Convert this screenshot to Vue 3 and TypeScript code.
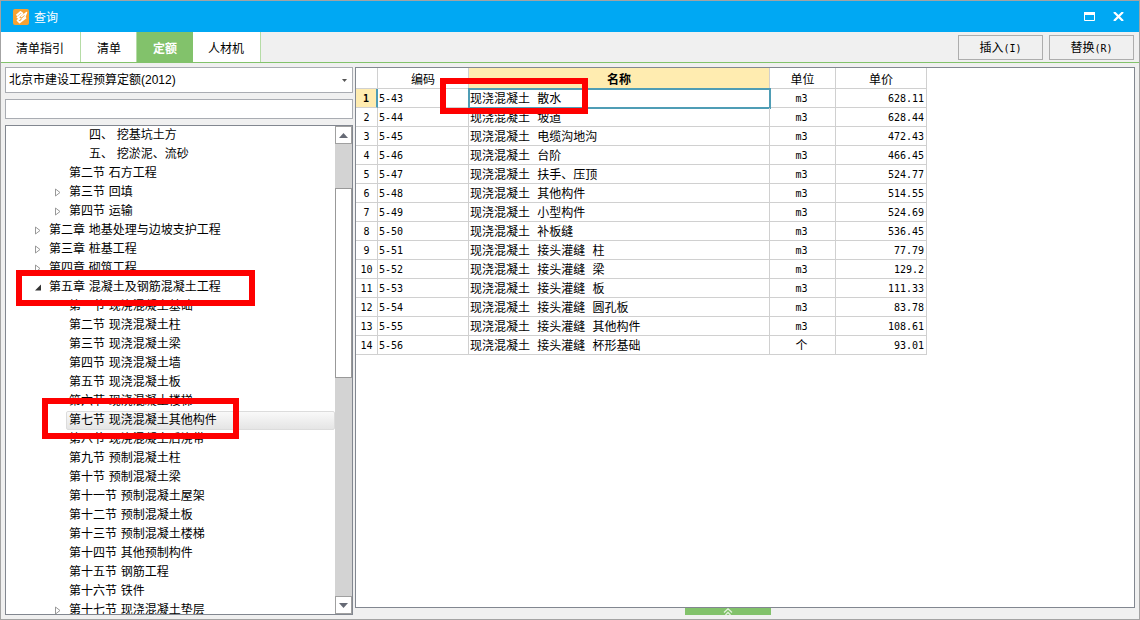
<script setup lang="ts">
import { ref } from 'vue'

interface TreeNode {
  text: string
  level: 1 | 2 | 3
  state?: 'open' | 'closed'
  mark?: 'chapter' | 'section'
}

interface Quota {
  code: string
  name: string
  unit: string
  price: string
}

const tabs = ['清单指引', '清单', '定额', '人材机']
const activeTab = ref('定额')
const library = ref('北京市建设工程预算定额(2012)')
const keyword = ref('')
const selectedNode = ref(15)
const selectedRow = ref(0)

const nodes: TreeNode[] = [
  { text: '四、 挖基坑土方', level: 3 },
  { text: '五、 挖淤泥、流砂', level: 3 },
  { text: '第二节 石方工程', level: 2 },
  { text: '第三节 回填', level: 2, state: 'closed' },
  { text: '第四节 运输', level: 2, state: 'closed' },
  { text: '第二章 地基处理与边坡支护工程', level: 1, state: 'closed' },
  { text: '第三章 桩基工程', level: 1, state: 'closed' },
  { text: '第四章 砌筑工程', level: 1, state: 'closed' },
  { text: '第五章 混凝土及钢筋混凝土工程', level: 1, state: 'open', mark: 'chapter' },
  { text: '第一节 现浇混凝土基础', level: 2 },
  { text: '第二节 现浇混凝土柱', level: 2 },
  { text: '第三节 现浇混凝土梁', level: 2 },
  { text: '第四节 现浇混凝土墙', level: 2 },
  { text: '第五节 现浇混凝土板', level: 2 },
  { text: '第六节 现浇混凝土楼梯', level: 2 },
  { text: '第七节 现浇混凝土其他构件', level: 2, mark: 'section' },
  { text: '第八节 现浇混凝土后浇带', level: 2 },
  { text: '第九节 预制混凝土柱', level: 2 },
  { text: '第十节 预制混凝土梁', level: 2 },
  { text: '第十一节 预制混凝土屋架', level: 2 },
  { text: '第十二节 预制混凝土板', level: 2 },
  { text: '第十三节 预制混凝土楼梯', level: 2 },
  { text: '第十四节 其他预制构件', level: 2 },
  { text: '第十五节 钢筋工程', level: 2 },
  { text: '第十六节 铁件', level: 2 },
  { text: '第十七节 现浇混凝土垫层', level: 2, state: 'closed' },
]

const rows: Quota[] = [
  { code: '5-43', name: '现浇混凝土 散水', unit: 'm3', price: '628.11' },
  { code: '5-44', name: '现浇混凝土 坡道', unit: 'm3', price: '628.44' },
  { code: '5-45', name: '现浇混凝土 电缆沟地沟', unit: 'm3', price: '472.43' },
  { code: '5-46', name: '现浇混凝土 台阶', unit: 'm3', price: '466.45' },
  { code: '5-47', name: '现浇混凝土 扶手、压顶', unit: 'm3', price: '524.77' },
  { code: '5-48', name: '现浇混凝土 其他构件', unit: 'm3', price: '514.55' },
  { code: '5-49', name: '现浇混凝土 小型构件', unit: 'm3', price: '524.69' },
  { code: '5-50', name: '现浇混凝土 补板缝', unit: 'm3', price: '536.45' },
  { code: '5-51', name: '现浇混凝土 接头灌缝 柱', unit: 'm3', price: '77.79' },
  { code: '5-52', name: '现浇混凝土 接头灌缝 梁', unit: 'm3', price: '129.2' },
  { code: '5-53', name: '现浇混凝土 接头灌缝 板', unit: 'm3', price: '111.33' },
  { code: '5-54', name: '现浇混凝土 接头灌缝 圆孔板', unit: 'm3', price: '83.78' },
  { code: '5-55', name: '现浇混凝土 接头灌缝 其他构件', unit: 'm3', price: '108.61' },
  { code: '5-56', name: '现浇混凝土 接头灌缝 杯形基础', unit: '个', price: '93.01' },
]
</script>

<template>
  <div class="window">
    <header class="titlebar">
      <svg class="logo" viewBox="0 0 16 16" aria-hidden="true">
        <rect width="16" height="16" rx="2" fill="#f7a233" />
        <path d="M3.500 6.500 7.500 3 9.500 4.500 4.500 8.500 7 9.500 4.500 11.500 6.500 13.500 13 8.500" fill="none" stroke="#fff" stroke-width="1.700" stroke-linejoin="round" />
        <path d="M8 8 13.500 3.500 12 7.500 8.500 10.500" fill="none" stroke="#fff" stroke-width="1.500" stroke-linejoin="round" />
      </svg>
      <h1>查询</h1>
      <div class="controls">
        <button type="button" aria-label="最大化">
          <svg width="11" height="9" viewBox="0 0 11 9"><path d="M.5.5h10v8H.5z" fill="none" stroke="#fff" /><path d="M0 0h11v3H0z" fill="#fff" /></svg>
        </button>
        <button type="button" aria-label="关闭">
          <svg width="11" height="9" viewBox="0 0 11 9"><path d="M1 0 10 9M10 0 1 9" stroke="#fff" stroke-width="2.200" /></svg>
        </button>
      </div>
    </header>

    <nav class="toolbar">
      <div class="tabs">
        <button v-for="tab in tabs" :key="tab" type="button" class="tab" :class="{ active: tab === activeTab }" @click="activeTab = tab">{{ tab }}</button>
      </div>
      <div class="actions">
        <button type="button" class="action">插入<span>(I)</span></button>
        <button type="button" class="action">替换<span>(R)</span></button>
      </div>
    </nav>

    <main class="body">
      <aside class="side">
        <div class="library">
          <select v-model="library" aria-label="定额库">
            <option>北京市建设工程预算定额(2012)</option>
          </select>
          <svg width="5" height="3" viewBox="0 0 5 3" aria-hidden="true"><path d="M0 0h5L2.500 3z" fill="#555" /></svg>
        </div>
        <input v-model="keyword" class="search" type="text" aria-label="搜索" />
        <div class="tree">
          <ul role="tree" aria-label="章节">
            <li v-for="(node, i) in nodes" :key="i" role="treeitem" :aria-selected="i === selectedNode" class="node" :class="['level-' + node.level, { selected: i === selectedNode }]" @click="selectedNode = i">
              <span class="slot">
                <button v-if="node.state" type="button" class="expander" :aria-label="node.state === 'open' ? '折叠' : '展开'">
                  <svg v-if="node.state === 'closed'" width="6" height="9" viewBox="0 0 6 9"><path d="M.5 1v7L5 4.500z" fill="#fff" stroke="#999" /></svg>
                  <svg v-else width="6" height="9" viewBox="0 0 6 9"><path d="M6 1.500v6H0z" fill="#333" /></svg>
                </button>
              </span>
              <span class="label">{{ node.text }}</span>
              <i v-if="node.mark" class="mark" :class="node.mark"></i>
            </li>
          </ul>
          <div class="scrollbar">
            <button type="button" aria-label="向上滚动"><svg width="9" height="5" viewBox="0 0 9 5"><path d="M0 5 4.500 0 9 5z" fill="#666a75" /></svg></button>
            <div class="track">
              <div class="before"></div>
              <div class="thumb"></div>
              <div class="after"></div>
            </div>
            <button type="button" aria-label="向下滚动"><svg width="9" height="5" viewBox="0 0 9 5"><path d="M0 0h9L4.500 5z" fill="#666a75" /></svg></button>
          </div>
        </div>
      </aside>

      <section class="content">
        <div class="sheet">
          <table>
            <colgroup>
              <col class="c-no" /><col class="c-code" /><col class="c-name" /><col class="c-unit" /><col class="c-price" />
            </colgroup>
            <thead>
              <tr>
                <th></th>
                <th>编码</th>
                <th class="current">名称</th>
                <th>单位</th>
                <th>单价</th>
              </tr>
            </thead>
            <tbody>
              <tr v-for="(row, i) in rows" :key="row.code" :class="{ picked: i === selectedRow }" @click="selectedRow = i">
                <td class="no">{{ i + 1 }}</td>
                <td class="code">{{ row.code }}</td>
                <td class="name">{{ row.name }}<i v-if="i === 0" class="mark cell"></i></td>
                <td class="unit" :class="{ latin: row.unit === 'm3' }">{{ row.unit }}</td>
                <td class="price">{{ row.price }}</td>
              </tr>
            </tbody>
          </table>
        </div>
        <button type="button" class="drawer" aria-label="展开">
          <svg width="10" height="7" viewBox="0 0 10 7"><path d="M1 4.500 5 .800 9 4.500M2.500 7 5 4.500 7.500 7" fill="none" stroke="#e2f2dc" stroke-width="1.300" /></svg>
        </button>
      </section>
    </main>
  </div>
</template>

<style>
body {
  margin: 0;
}
</style>

<style scoped>
* {
  box-sizing: border-box;
}
.window {
  height: 100vh;
  display: flex;
  flex-direction: column;
  border: 1px solid #a3a3a3;
  background: #f0f0f0;
  color: #000;
  font: 12px/18px "Liberation Sans", "Noto Sans CJK SC", sans-serif;
}
button,
select,
input {
  margin: 0;
  padding: 0;
  border: 0;
  border-radius: 0;
  background: none;
  color: inherit;
  font: inherit;
}
svg {
  display: block;
}
.titlebar {
  flex: none;
  height: 31px;
  display: flex;
  align-items: center;
  gap: 5px;
  padding: 0 12px;
  background: #00a8f3;
  color: #fff;
}
.logo {
  width: 16px;
  height: 16px;
}
h1 {
  margin: 0;
  padding-top: 2px;
  font-size: 12px;
  font-weight: 400;
}
.controls {
  margin-left: auto;
  display: flex;
  gap: 12px;
}
.controls button {
  padding: 4px 3px;
}
.toolbar {
  flex: none;
  height: 31px;
  display: flex;
  justify-content: space-between;
  border-bottom: 1px solid #82c26b;
}
.tabs {
  display: flex;
}
.tab {
  padding: 4px 16px 0 15px;
  border-right: 1px solid #b5dca6;
  background: #fff;
}
.tab:nth-child(2),
.tab.active {
  padding: 4px 15px 0 16px;
}
.tab.active {
  border-color: #82c26b;
  background: #82c26b;
  color: #fff;
  font-weight: 700;
}
.actions {
  display: flex;
  gap: 6px;
  padding: 3px 5px 2px 0;
}
.action {
  width: 85px;
  padding-top: 1px;
  border: 1px solid #adadad;
}
.action span {
  font: 10px/18px "DejaVu Sans Mono", monospace;
}
.body {
  flex: 1;
  min-height: 0;
  display: flex;
  gap: 2px;
  padding: 4px;
}
.side {
  flex: none;
  width: 348px;
  display: flex;
  flex-direction: column;
  gap: 6px;
}
.library {
  position: relative;
  height: 26px;
  border: 1px solid #a9acb2;
  background: #fff;
}
.library select {
  width: 100%;
  height: 24px;
  padding-left: 3px;
  appearance: none;
}
.library svg {
  position: absolute;
  right: 5px;
  top: 11px;
  pointer-events: none;
}
.search {
  height: 20px;
  padding: 0 3px;
  border: 1px solid #a9acb2;
  background: #fff;
}
.tree {
  flex: 1;
  min-height: 0;
  display: flex;
  border: 1px solid #828790;
  background: #fff;
  overflow: hidden;
}
.tree ul {
  flex: 1;
  margin: 0;
  padding: 0;
  list-style: none;
  font-family: "DejaVu Sans", "Noto Sans CJK SC", sans-serif;
}
.node {
  position: relative;
  height: 19px;
  display: flex;
}
.level-1 {
  padding-left: 26px;
}
.level-2 {
  padding-left: 46px;
}
.level-3 {
  padding-left: 66px;
}
.slot {
  flex: none;
  width: 14px;
  padding: 5px 3px;
}
.expander {
  display: block;
}
.label {
  flex: 1;
  padding-left: 2px;
  border: 1px solid transparent;
  line-height: 17px;
  white-space: nowrap;
}
.selected .label {
  border-color: #dcdcdc;
  border-radius: 2px;
  background: linear-gradient(#f9f9f9, #e5e5e5);
}
.mark {
  position: absolute;
  z-index: 2;
  border: 6px solid #fe0000;
  pointer-events: none;
}
.mark.chapter {
  left: 10px;
  top: -8px;
  width: 239px;
  height: 36px;
}
.mark.section {
  left: 36px;
  top: -13px;
  width: 197px;
  height: 41px;
}
.mark.cell {
  left: -29px;
  top: -11px;
  width: 148px;
  height: 36px;
}
.scrollbar {
  flex: none;
  width: 17px;
  display: flex;
  flex-direction: column;
  background: #d3d3d3;
}
.scrollbar button {
  flex: none;
  height: 18px;
  display: grid;
  place-items: center;
  border: 1px solid #a0a0a0;
  background: #fff;
}
.track {
  flex: 1;
  display: flex;
  flex-direction: column;
}
.before {
  flex: 44;
}
.thumb {
  flex: 190;
  border: 1px solid #999;
  background: #fff;
}
.after {
  flex: 219;
}
.content {
  flex: 1;
  min-width: 0;
  display: flex;
  flex-direction: column;
  align-items: center;
}
.sheet {
  flex: 1;
  min-height: 0;
  width: 100%;
  border: 1px solid #828790;
  background: #fff;
  overflow: hidden;
}
table {
  width: 571px;
  table-layout: fixed;
  border-collapse: separate;
  border-spacing: 0;
}
.c-no {
  width: 22px;
}
.c-code,
.c-price {
  width: 91px;
}
.c-name {
  width: 301px;
}
.c-unit {
  width: 66px;
}
th,
td {
  padding: 2px 0 0;
  border-right: 1px solid #d0d0d0;
  border-bottom: 1px solid #d0d0d0;
  line-height: 16px;
}
th {
  height: 21px;
  padding-top: 3px;
  font-weight: 400;
}
th.current {
  background: #ffecb0;
  font-weight: 700;
}
td {
  height: 19px;
  font-family: "DejaVu Sans Mono", "Noto Sans CJK SC", monospace;
}
.no,
.code,
.latin,
.price {
  font-size: 10px;
}
.no,
.unit {
  text-align: center;
}
.unit {
  padding-right: 2px;
}
.code {
  padding-left: 1px;
}
.name {
  position: relative;
  padding-left: 1px;
  white-space: nowrap;
}
.price {
  padding-right: 2px;
  text-align: right;
}
.picked .no {
  border-right: 2px solid #4f9db5;
  background: #ffecb0;
  font-weight: 700;
}
.picked .name {
  outline: 2px solid #4f9db5;
  outline-offset: -1px;
}
.drawer {
  flex: none;
  width: 86px;
  height: 7px;
  display: grid;
  place-items: center;
  margin-right: 34px;
  background: #82c26b;
}
</style>
